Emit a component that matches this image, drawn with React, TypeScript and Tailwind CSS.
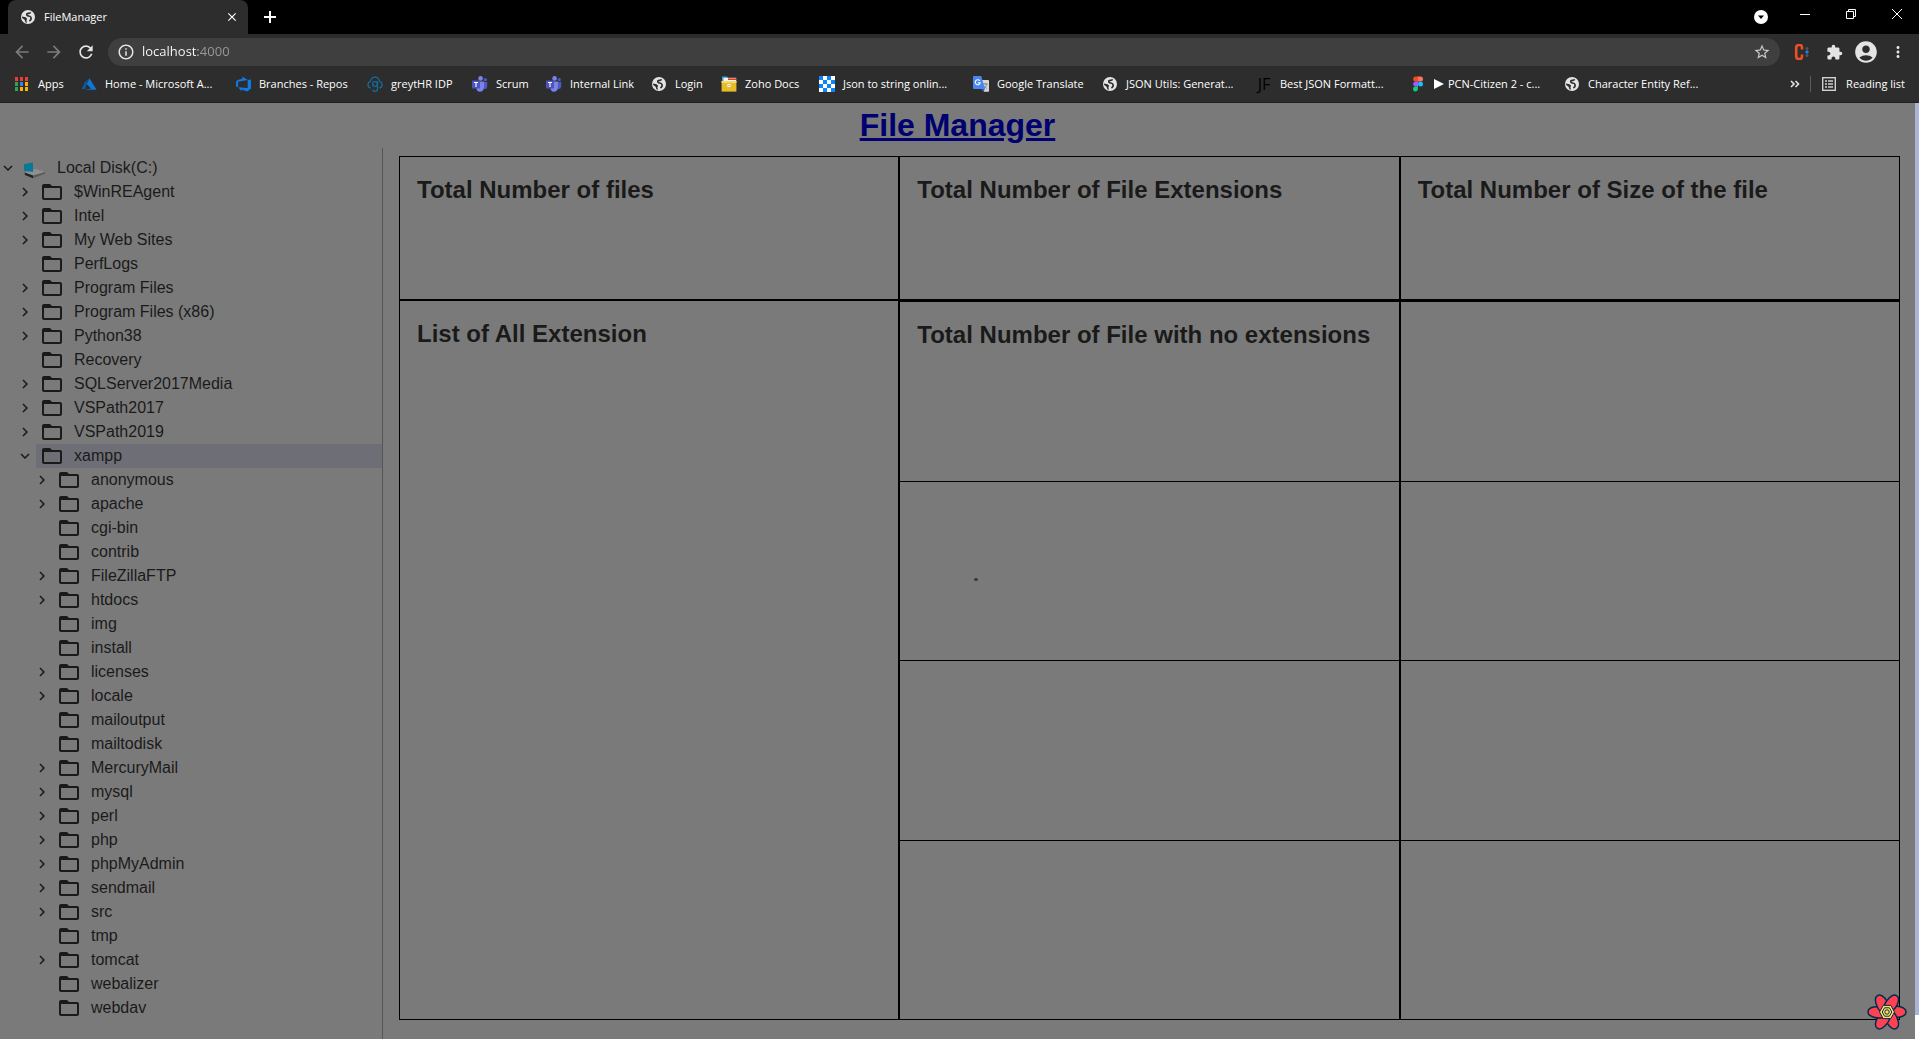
import React from "react";
import {
  MdAccountCircle,
  MdArrowBack,
  MdArrowForward,
  MdClose,
  MdExtension,
  MdInfoOutline,
  MdMoreVert,
  MdRefresh,
  MdStarBorder,
} from "react-icons/md";

function Globe() {
  return (
    <svg viewBox="0 0 16 16" className="size-4 shrink-0" aria-hidden="true">
      <circle cx="8" cy="8" r="7" fill="#e4e4e4" />
      <path
        d="M10.500 3.200C10 4.600 8.600 4.200 7.400 4.600S6.600 6.600 8 6.900s2.600.3 3 1.500-.2 2.600-1.600 3.600"
        fill="none"
        stroke="#2d2d2d"
        strokeWidth="1.600"
      />
      <path d="M2 7.600l3.600.6 1.600 1.600-.8 1.400.6 2.600-1.600-.6L4.600 10.800 2.200 9z" fill="#2d2d2d" />
    </svg>
  );
}

function AppsIcon() {
  const dots = ["#f23b35", "#f23b35", "#f23b35", "#34a05a", "#2b86f5", "#f5b400", "#34a05a", "#f5b400", "#f5b400"];
  return (
    <svg viewBox="0 0 13 14" className="h-[14px] w-[13px] shrink-0" aria-hidden="true">
      {dots.map((c, i) => (
        <rect key={i} x={(i % 3) * 5} y={Math.floor(i / 3) * 5} width="3" height="4" fill={c} />
      ))}
    </svg>
  );
}

function AzureIcon() {
  return (
    <svg viewBox="0 0 16 16" className="size-4 shrink-0" aria-hidden="true">
      <path d="M7.6 3 L4 6.2 L0.6 13 H3.8 Z" fill="#0a5ca8" />
      <path d="M8.4 2.2 L5.8 8.2 L10.2 12.4 L3.8 13.8 H15.6 Z" fill="#0f78d4" />
    </svg>
  );
}

function DevOpsIcon() {
  return (
    <svg viewBox="0 0 16 16" className="size-4 shrink-0" aria-hidden="true">
      <path
        d="M16 3.4v9.1L12.3 15.4 6.6 13.4v2L3.3 11.2l9.4.7V4.1zM12.7 4.1 7.4.5v2.2L2.5 4.1 1 6v4.4l2.1.9V5.7z"
        fill="#0f7be0"
      />
    </svg>
  );
}

function GreytIcon() {
  return (
    <svg viewBox="0 0 16 16" className="size-4 shrink-0" aria-hidden="true">
      <g fill="none" stroke="#176a9c" strokeWidth="1.3">
        <path d="M3.6 12C1.6 11.6.8 9.8 1 8c.2-1.500 1.200-2.300 2.400-2.600C4 2.600 5.800 1.200 8 1.200s4 1.400 4.600 4.200c1.200.3 2.200 1.100 2.400 2.600.2 1.800-.6 3.600-2.600 4" />
        <circle cx="8" cy="8" r="2.400" />
        <path d="M10.500 5.300v7.400c0 1.800-1 2.600-2.500 2.600-1.300 0-2.200-.6-2.500-1.600" />
      </g>
    </svg>
  );
}

function TeamsIcon() {
  return (
    <svg viewBox="0 0 16 16" className="size-4 shrink-0" aria-hidden="true">
      <circle cx="13.300" cy="3.700" r="1.600" fill="#5059c9" />
      <circle cx="8.600" cy="2.400" r="2.300" fill="#7b83eb" />
      <path d="M11.500 6H15.200v4.400c0 1.600-1.300 2.800-2.900 2.700z" fill="#5059c9" />
      <path d="M4.600 5.500H12v6c0 2.500-1.800 4.300-4.100 4.300-2.200 0-3.600-1.700-3.600-4z" fill="#7b83eb" />
      <rect x="0" y="4.500" width="8" height="8" rx=".7" fill="#4b53bc" />
      <path d="M2 6.500h4M4 6.500v4.500" stroke="#fff" strokeWidth="1.100" />
    </svg>
  );
}

function ZohoIcon() {
  return (
    <svg viewBox="0 0 16 16" className="size-4 shrink-0" aria-hidden="true">
      <path d="M1 .6h5l1 1.400h7V6H1z" fill="#3aa0e0" />
      <path d="M2.500 1.800h12.700V6H2.500z" fill="#f4f4f4" />
      <path d="M7 2.400h8V4H7z" fill="#e03a2c" />
      <rect x=".6" y="5" width="14.800" height="10.600" fill="#e8bb28" />
      <path d="M.6 5h14.800v2H.6z" fill="#f6d968" />
      <path d="M6.500 8h3v3h-3z" fill="#fff" />
      <path d="M7.500 9h1v1h-1z" fill="#a06a00" />
    </svg>
  );
}

function CheckerIcon() {
  const cells = Array.from({ length: 16 }, (_, i) => i).filter((i) => ((i % 4) + Math.floor(i / 4)) % 2 === 0);
  return (
    <svg viewBox="0 0 16 16" className="size-4 shrink-0" aria-hidden="true">
      <rect width="16" height="16" fill="#fff" />
      {cells.map((i) => (
        <rect key={i} x={(i % 4) * 4} y={Math.floor(i / 4) * 4} width="4" height="4" fill="#0a84ff" />
      ))}
    </svg>
  );
}

function TranslateIcon() {
  return (
    <svg viewBox="0 0 16 16" className="size-4 shrink-0" aria-hidden="true">
      <path d="M7 4h8.200c.5 0 .8.300.8.800V15c0 .5-.3.800-.8.800H11z" fill="#d6d6d6" />
      <path d="M9.800 8h5M12.300 7v1M10.300 12.500c2-1 3-2.500 3.500-4.500M10.800 9.500c.8 1.500 2 2.400 3.400 3" stroke="#777f86" fill="none" strokeWidth=".9" />
      <path d="M.8 0h7.400L12 13H.8C.3 13 0 12.700 0 12.200V.8C0 .3.3 0 .8 0z" fill="#4a86f0" />
      <path d="M8 13h3.900L10.500 15.800z" fill="#2a5fc4" />
      <path d="M6.800 4.800A2.500 2.500 0 1 0 7.200 6.700H4.800" stroke="#fff" fill="none" strokeWidth="1.100" />
    </svg>
  );
}

function JfIcon() {
  return (
    <span className="w-4 shrink-0 text-center text-base leading-4 text-black" aria-hidden="true">
      JF
    </span>
  );
}

function FigmaIcon() {
  return (
    <svg viewBox="0 0 16 16" className="size-4 shrink-0" aria-hidden="true">
      <path d="M8 .5H5.700a2.500 2.500 0 0 0 0 5H8z" fill="#f24e1e" />
      <path d="M8 .5h2.500a2.500 2.500 0 0 1 0 5H8z" fill="#ff7262" />
      <path d="M8 5.500H5.700a2.500 2.500 0 0 0 0 5H8z" fill="#a259ff" />
      <circle cx="10.500" cy="8" r="2.500" fill="#1abcfe" />
      <path d="M8 10.500H5.700a2.500 2.500 0 1 0 2.300 2.500z" fill="#0acf83" />
    </svg>
  );
}

const bookmarks: { label: string; width: string; icon: React.ReactNode }[] = [
  { label: "Apps", width: "w-[66px]", icon: <AppsIcon /> },
  { label: "Home - Microsoft A...", width: "w-[154px]", icon: <AzureIcon /> },
  { label: "Branches - Repos", width: "w-[132px]", icon: <DevOpsIcon /> },
  { label: "greytHR IDP", width: "w-[105px]", icon: <GreytIcon /> },
  { label: "Scrum", width: "w-[74px]", icon: <TeamsIcon /> },
  { label: "Internal Link", width: "w-[105px]", icon: <TeamsIcon /> },
  { label: "Login", width: "w-[70px]", icon: <Globe /> },
  { label: "Zoho Docs", width: "w-[98px]", icon: <ZohoIcon /> },
  { label: "Json to string onlin...", width: "w-[154px]", icon: <CheckerIcon /> },
  { label: "Google Translate", width: "w-[129px]", icon: <TranslateIcon /> },
  { label: "JSON Utils: Generat...", width: "w-[154px]", icon: <Globe /> },
  { label: "Best JSON Formatt...", width: "w-[154px]", icon: <JfIcon /> },
  { label: "PCN-Citizen 2 - c...", width: "w-[154px]", icon: <FigmaIcon /> },
  { label: "Character Entity Ref...", width: "w-[154px]", icon: <Globe /> },
];

function BrowserChrome() {
  return (
    <header className="font-['Open_Sans',sans-serif] text-white">
      <div className="flex h-[34px] bg-black">
        <div className="ml-2 flex w-60 items-center rounded-t-lg bg-[#2d2d2d] pl-3 pr-2">
          <Globe />
          <span className="ml-2 flex-1 text-[11px]">FileManager</span>
          <button aria-label="Close tab" className="flex size-4 items-center justify-center">
            <MdClose size={14} />
          </button>
        </div>
        <button aria-label="New tab" className="ml-3 flex w-5 items-center justify-center">
          <svg viewBox="0 0 12 12" className="size-3" aria-hidden="true">
            <path d="M6 0v12M0 6h12" stroke="#fff" strokeWidth="2" />
          </svg>
        </button>
        <div className="ml-auto flex items-start">
          <button aria-label="Search tabs" className="flex h-[34px] w-11 items-center justify-center">
            <svg viewBox="0 0 14 14" className="size-[14px]" aria-hidden="true">
              <circle cx="7" cy="7" r="7" fill="#fff" />
              <path d="M4 5.500h6L7 9z" fill="#000" />
            </svg>
          </button>
          <button aria-label="Minimize" className="flex h-7 w-11 items-center justify-center">
            <svg viewBox="0 0 10 10" className="size-[10px]" aria-hidden="true">
              <path d="M0 5.500h10" stroke="#fff" />
            </svg>
          </button>
          <button aria-label="Restore" className="flex h-7 w-12 items-center justify-center">
            <svg viewBox="0 0 10 10" className="size-[10px]" fill="none" stroke="#fff" aria-hidden="true">
              <path d="M.5 2.500h7v7h-7zM2.500 2.500v-2h7v7h-2" />
            </svg>
          </button>
          <button aria-label="Close window" className="flex h-7 w-11 items-center justify-center">
            <svg viewBox="0 0 10 10" className="size-[10px]" aria-hidden="true">
              <path d="M0 0l10 10M10 0L0 10" stroke="#fff" />
            </svg>
          </button>
        </div>
      </div>

      <div className="flex h-9 items-center bg-[#2d2d2d] pl-3 pr-3">
        <button aria-label="Back" className="w-8 text-[#7b7b7b]">
          <MdArrowBack size={20} />
        </button>
        <button aria-label="Forward" className="w-8 text-[#7b7b7b]">
          <MdArrowForward size={20} />
        </button>
        <button aria-label="Reload" className="w-8 text-[#e4e4e4]">
          <MdRefresh size={20} />
        </button>
        <div className="flex h-7 flex-1 items-center rounded-full bg-[#3f3f3f] pl-[9px] pr-[9px]">
          <MdInfoOutline size={18} color="#e4e4e4" />
          <input
            aria-label="Address"
            defaultValue="localhost:4000"
            className="ml-[7px] flex-1 bg-[linear-gradient(90deg,#ffffff_56px,#9a9a9a_56px)] bg-clip-text text-[13px] text-transparent outline-none"
          />
          <button aria-label="Bookmark this tab" className="text-[#c8c8c8]">
            <MdStarBorder size={18} />
          </button>
        </div>
        <button aria-label="Site extension" className="ml-[14px]">
          <svg viewBox="0 0 16 16" className="size-4" aria-hidden="true">
            <path d="M8 5.500V3.500C8 1.500 7 1 5.300 1S2.200 1.800 2.200 3.500v9c0 1.700 1 2.500 3 2.500S8 14.200 8 12.500v-2" fill="none" stroke="#f04e23" strokeWidth="2.600" />
            <circle cx="13" cy="4.500" r="1.500" fill="#555" />
            <circle cx="13" cy="8" r="1.700" fill="#1f7fe0" />
            <circle cx="13" cy="11.500" r="1.500" fill="#555" />
          </svg>
        </button>
        <button aria-label="Extensions" className="ml-4 text-[#e4e4e4]">
          <MdExtension size={17} />
        </button>
        <button aria-label="Profile" className="ml-[10px] text-[#e4e4e4]">
          <MdAccountCircle size={26} />
        </button>
        <button aria-label="Menu" className="ml-[10px] text-[#e4e4e4]">
          <MdMoreVert size={18} />
        </button>
      </div>

      <nav aria-label="Bookmarks" className="flex h-[33px] items-center overflow-hidden whitespace-nowrap border-b border-[#1f1f1f] bg-[#2d2d2d] pb-1 pl-[15px] pr-[14px] text-[11px]">
        {bookmarks.map((b, i) => (
          <a key={b.label} href="#" className={`flex shrink-0 items-center ${i === 0 ? "gap-[10px]" : "gap-2"} ${b.width}`}>
            {b.icon}
            <span className="flex items-center gap-1">
              {b.label.startsWith("PCN") && (
                <svg viewBox="0 0 10 10" className="size-[10px]" aria-hidden="true">
                  <path d="M0 0l10 5-10 5z" fill="#fff" />
                </svg>
              )}
              {b.label}
            </span>
          </a>
        ))}
        <button aria-label="More bookmarks" className="ml-auto">
          <svg viewBox="0 0 10 8" className="h-2 w-[10px]" fill="none" stroke="#e4e4e4" strokeWidth="1.600" aria-hidden="true">
            <path d="M1 1l3 3-3 3M5.500 1l3 3-3 3" />
          </svg>
        </button>
        <span className="ml-[10px] h-4 w-px bg-[#5c5c5c]" />
        <a href="#" className="ml-[11px] flex items-center gap-[10px]">
          <svg viewBox="0 0 14 14" className="size-[14px]" aria-hidden="true">
            <rect x=".7" y=".7" width="12.600" height="12.600" fill="none" stroke="#d0d0d0" strokeWidth="1.400" />
            <path d="M3 4h2M6 4h5M3 7h2M6 7h5M3 10h2M6 10h5" stroke="#d0d0d0" strokeWidth="1.300" />
          </svg>
          Reading list
        </a>
      </nav>
    </header>
  );
}

function FolderIcon() {
  return (
    <svg viewBox="0 0 24 24" className="size-6 shrink-0" fill="#1a1a1a" aria-hidden="true">
      <path d="M20 6h-8l-2-2H4c-1.100 0-1.990.9-1.990 2L2 18c0 1.100.9 2 2 2h16c1.100 0 2-.9 2-2V8c0-1.100-.9-2-2-2zm0 12H4V8h16v10z" />
    </svg>
  );
}

function DiskIcon() {
  return (
    <svg viewBox="0 0 24 24" className="size-6 shrink-0" aria-hidden="true">
      <path d="M1.500 16.500L13 13l9 3-11 3.800z" fill="#8f8f8f" />
      <path d="M1.500 16.500L10 19.500v2.700L2 19z" fill="#1c2422" />
      <path d="M10 19.500l12-3.500v1.800L10 22.200z" fill="#5c5c5c" />
      <path d="M1 8l4-.6v3.600H1zM5 7.300L10 6.600V11H5zM1 11h4v4.200L1 14.700zM5 11H10v4.900l-5-.6z" fill="#087896" />
    </svg>
  );
}

type Kind = "open" | "closed" | "leaf";
type Node = [name: string, level: 0 | 1 | 2, kind: Kind];

const nodes: Node[] = [
  ["Local Disk(C:)", 0, "open"],
  ["$WinREAgent", 1, "closed"],
  ["Intel", 1, "closed"],
  ["My Web Sites", 1, "closed"],
  ["PerfLogs", 1, "leaf"],
  ["Program Files", 1, "closed"],
  ["Program Files (x86)", 1, "closed"],
  ["Python38", 1, "closed"],
  ["Recovery", 1, "leaf"],
  ["SQLServer2017Media", 1, "closed"],
  ["VSPath2017", 1, "closed"],
  ["VSPath2019", 1, "closed"],
  ["xampp", 1, "open"],
  ["anonymous", 2, "closed"],
  ["apache", 2, "closed"],
  ["cgi-bin", 2, "leaf"],
  ["contrib", 2, "leaf"],
  ["FileZillaFTP", 2, "closed"],
  ["htdocs", 2, "closed"],
  ["img", 2, "leaf"],
  ["install", 2, "leaf"],
  ["licenses", 2, "closed"],
  ["locale", 2, "closed"],
  ["mailoutput", 2, "leaf"],
  ["mailtodisk", 2, "leaf"],
  ["MercuryMail", 2, "closed"],
  ["mysql", 2, "closed"],
  ["perl", 2, "closed"],
  ["php", 2, "closed"],
  ["phpMyAdmin", 2, "closed"],
  ["sendmail", 2, "closed"],
  ["src", 2, "closed"],
  ["tmp", 2, "leaf"],
  ["tomcat", 2, "closed"],
  ["webalizer", 2, "leaf"],
  ["webdav", 2, "leaf"],
];

const indents = ["pl-0", "pl-[17px]", "pl-[34px]"];

function TreeRow({ node: [name, level, kind] }: { node: Node }) {
  const selected = name === "xampp";
  return (
    <li role="treeitem" aria-level={level + 1} aria-selected={selected} aria-expanded={kind === "leaf" ? undefined : kind === "open"} className={indents[level]}>
      <button className="flex h-6 w-full items-center text-left">
        <span className="mr-1 flex w-[15px] shrink-0 justify-center">
          {kind !== "leaf" && (
            <svg viewBox="0 0 24 24" className="size-[18px] shrink-0" fill="#1a1a1a" aria-hidden="true">
              <path d={kind === "open" ? "M16.590 8.590L12 13.170 7.410 8.590 6 10l6 6 6-6z" : "M10 6L8.590 7.410 13.170 12l-4.580 4.590L10 18l6-6z"} />
            </svg>
          )}
        </span>
        <span className={`flex h-6 flex-1 items-center gap-[10px] pl-1 ${selected ? "bg-[#6e6f76]" : ""}`}>
          {level === 0 ? <DiskIcon /> : <FolderIcon />}
          {name}
        </span>
      </button>
    </li>
  );
}

function Panel({ title, className = "" }: { title: string; className?: string }) {
  return (
    <section className={`border border-black px-[17px] py-4 ${className}`}>
      <h2 className="text-2xl/[34px] font-bold">{title}</h2>
    </section>
  );
}

function QueryLogo() {
  return (
    <svg viewBox="-20 -20 40 40" className="size-10" aria-hidden="true">
      {[0, 60, 120, 180, 240, 300].map((a) => (
        <path
          key={a}
          transform={`rotate(${a})`}
          d="M3 -5.500C9 -7 19 -5 19 0S9 7 3 3.500z"
          fill="#ff4154"
          stroke="#002c4b"
          strokeWidth="1.500"
        />
      ))}
      <path d="M-7.500 0L-3.800 -6.600H3.800L7.500 0 3.800 6.600H-3.800z" fill="#ffe066" stroke="#002c4b" strokeWidth="1" />
      <path d="M-4.800 0L-2.400 -4.200H2.400L4.800 0 2.400 4.200H-2.400z" fill="none" stroke="#002c4b" strokeWidth="1" />
      <circle r="2.200" fill="none" stroke="#002c4b" strokeWidth="1" />
    </svg>
  );
}

export default function App() {
  return (
    <div className="flex min-h-screen flex-col bg-[#7a7a7a]">
      <BrowserChrome />
      <div className="relative flex flex-1 font-['Liberation_Sans',Arial,sans-serif] text-base text-[#1a1a1a]">
        <div className="flex flex-1 flex-col">
          <h1 className="text-center text-[32px] font-bold leading-[45px]">
            <a href="#" className="text-[#000070] underline">
              File Manager
            </a>
          </h1>
          <div className="flex flex-1">
            <aside className="w-[382px] shrink-0 pt-2">
              <ul role="tree" aria-label="Folders">
                {nodes.map((n) => (
                  <TreeRow key={n[0]} node={n} />
                ))}
              </ul>
            </aside>
            <main className="flex flex-1 flex-col border-l border-[#555555] pb-[19px] pl-4 pr-[15px] pt-2">
              <div className="grid grid-cols-3">
                <Panel title="Total Number of files" className="h-36" />
                <Panel title="Total Number of File Extensions" />
                <Panel title="Total Number of Size of the file" />
              </div>
              <div className="grid flex-1 grid-cols-3">
                <Panel title="List of All Extension" />
                {[0, 1].map((col) => (
                  <div key={col} className="grid grid-rows-4 border-x border-t-2 border-black">
                    {[0, 1, 2, 3].map((row) => (
                      <section key={row} className="relative border-b border-black px-[17px] py-4">
                        {col === 0 && row === 0 && (
                          <h2 className="text-2xl/[34px] font-bold">Total Number of File with no extensions</h2>
                        )}
                        {col === 0 && row === 1 && (
                          <span className="absolute left-[74px] top-24 h-[3px] w-1 rounded-full bg-[#3c3c3c]" />
                        )}
                      </section>
                    ))}
                  </div>
                ))}
              </div>
            </main>
          </div>
        </div>
        <div className="flex w-1 flex-col bg-white pb-6">
          <div className="flex-1 bg-[#aab3da]" />
        </div>
        <button aria-label="Open query devtools" className="absolute bottom-[7px] right-3">
          <QueryLogo />
        </button>
      </div>
    </div>
  );
}
